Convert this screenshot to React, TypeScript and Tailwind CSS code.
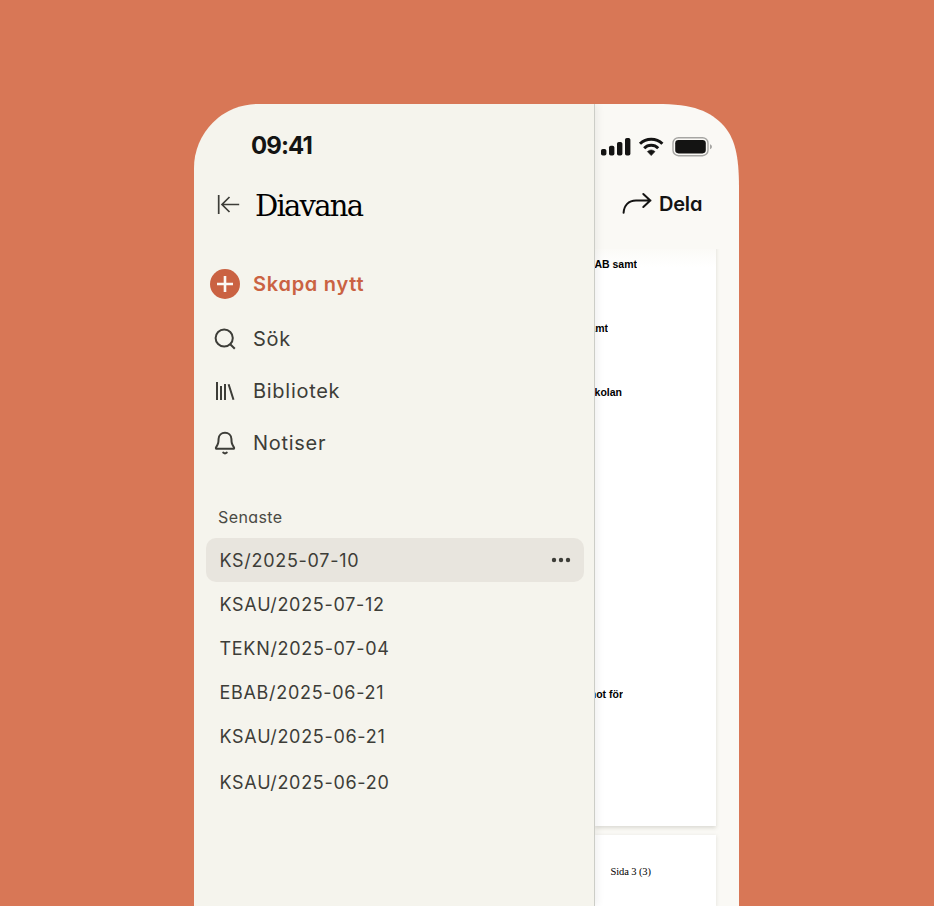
import React from "react";

const recent = [
  "KS/2025-07-10",
  "KSAU/2025-07-12",
  "TEKN/2025-07-04",
  "EBAB/2025-06-21",
  "KSAU/2025-06-21",
  "KSAU/2025-06-20",
];

function SearchIcon() {
  return (
    <svg width="30" height="30" viewBox="0 0 30 30" fill="none" stroke="#3d3d38" strokeWidth="2">
      <circle cx="14.2" cy="14" r="8.6" />
      <path d="M20.200 20.200l4.600 4.600" />
    </svg>
  );
}

function LibraryIcon() {
  return (
    <svg width="30" height="30" viewBox="0 0 30 30" fill="none" stroke="#3d3d38" strokeWidth="2">
      <path d="M7 6v18M11 10v14M15 8v16M18.6 8.2l4.9 15.6" />
    </svg>
  );
}

function BellIcon() {
  return (
    <svg width="30" height="30" viewBox="0 0 30 30" fill="none" stroke="#3d3d38" strokeWidth="2" strokeLinejoin="round" strokeLinecap="round">
      <path d="M15 4.800c-3.600 0-6.200 2.500-6.400 6l-.2 3c-.1 1.200-.4 2-1 3.100l-1.400 2.500c-.4.800 0 1.400.8 1.400h16.400c.8 0 1.200-.6.8-1.400l-1.400-2.500c-.6-1.100-.9-1.900-1-3.100l-.2-3c-.2-3.500-2.800-6-6.400-6z" />
      <path d="M13.200 24.600c1 .9 2.600.9 3.600 0" />
    </svg>
  );
}

function NavItem({ icon, label }: { icon: React.ReactNode; label: string }) {
  return (
    <div className="flex h-[52px] items-center gap-[13px]">
      {icon}
      <span className="text-[20px] tracking-[0.72px] text-[#3d3d38]">{label}</span>
    </div>
  );
}

function Drawer() {
  return (
    <aside className="z-10 flex w-[401px] shrink-0 flex-col border-r border-[#cccdc7] bg-[#f5f4ed] shadow-[2px_0_8px_rgba(0,0,0,0.07)]">
      <div className="mt-[27px] ml-[57px] h-[30px] text-[24px] leading-[30px] font-bold tracking-[-0.9px] text-[#141413]">
        09:41
      </div>
      <div className="mt-[23px] ml-[23px] flex h-[40px] items-center">
        <svg width="24" height="22" viewBox="0 0 24 22" fill="none" stroke="#3d3d38" strokeWidth="1.700">
          <path d="M1.700 2v19M22.200 11.500H5M12.500 4L5 11.500l7.500 7.500" />
        </svg>
        <span className="ml-[14px] pt-[3px] font-['DejaVu_Serif',serif] text-[29px] leading-[40px] tracking-[-1.75px] text-black">
          Diavana
        </span>
      </div>
      <nav className="mt-[44px] ml-4 flex flex-col">
        <div className="mb-[13px] flex h-[32px] items-center gap-[13px]">
          <svg width="30" height="30" viewBox="0 0 30 30">
            <circle cx="15" cy="15" r="15" fill="#ca6242" />
            <path d="M15 7v16M7 15h16" stroke="#fbf9f5" strokeWidth="2.600" />
          </svg>
          <span className="text-[20px] font-semibold tracking-[0.74px] text-[#ca6242]">Skapa nytt</span>
        </div>
        <NavItem icon={<SearchIcon />} label="Sök" />
        <NavItem icon={<LibraryIcon />} label="Bibliotek" />
        <NavItem icon={<BellIcon />} label="Notiser" />
      </nav>
      <div className="mt-[36px] ml-6 h-[24px] text-[16px] leading-[24px] tracking-[0.4px] text-[#4a4a44]">Senaste</div>
      <ul className="mt-[9px] mr-[10px] ml-3">
        {recent.map((name, i) => (
          <li
            key={i}
            className={
              "flex h-[44px] items-center justify-between rounded-[10px] pr-[13px] pl-[13.500px] text-[18px] tracking-[0.7px] text-[#3d3d38]" +
              (i === 0 ? " bg-[#e8e5de]" : "") +
              (i === 5 ? " mt-[2px]" : "")
            }
          >
            <span>{name}</span>
            {i === 0 && (
              <svg width="20" height="6" viewBox="0 0 20 6" fill="#3d3d38">
                <circle cx="3" cy="3" r="2.200" />
                <circle cx="10" cy="3" r="2.200" />
                <circle cx="17" cy="3" r="2.200" />
              </svg>
            )}
          </li>
        ))}
      </ul>
    </aside>
  );
}

function StatusIcons() {
  return (
    <svg width="114" height="22" viewBox="0 0 114 22">
      <g fill="#141413">
        <rect x="1" y="13" width="5.400" height="6.500" rx="1.800" />
        <rect x="9" y="9.700" width="5.400" height="9.800" rx="1.800" />
        <rect x="17" y="6" width="5.400" height="13.500" rx="1.800" />
        <rect x="25" y="2" width="5.400" height="17.500" rx="1.800" />
        <path d="M47.400 15.600a5.800 5.800 0 0 1 7.600 0L51.200 19.600z" stroke="#141413" strokeWidth=".6" strokeLinejoin="round" />
      </g>
      <g fill="none" stroke="#141413" strokeWidth="3">
        <path d="M40 7.800a16 16 0 0 1 22.400 0" />
        <path d="M44.200 12.200a9.900 9.900 0 0 1 14 0" />
      </g>
      <rect x="73" y="1.700" width="35" height="18" rx="5.500" fill="none" stroke="#a6a6a3" strokeWidth="1.400" />
      <rect x="75.200" y="4" width="30.600" height="13.400" rx="3.300" fill="#141413" />
      <path d="M110 8.200c2.600.8 2.600 4.200 0 5z" fill="#a6a6a3" />
    </svg>
  );
}

function DocLine({ text, className }: { text: string; className: string }) {
  return (
    <div className={"flex h-[14px] justify-end overflow-hidden text-[10.500px] leading-[14px] font-bold whitespace-nowrap text-black " + className}>
      <span>{text}</span>
    </div>
  );
}

function DocumentView() {
  return (
    <main className="flex flex-1 flex-col overflow-hidden bg-[#faf9f5]">
      <div className="mt-[32px] ml-[5px] h-[22px]">
        <StatusIcons />
      </div>
      <div className="mt-[30px] ml-[26px] flex h-[32px] items-center">
        <svg width="32" height="24" viewBox="0 0 32 24" fill="none" stroke="#141413" strokeWidth="2" strokeLinecap="round" strokeLinejoin="round">
          <path d="M2.600 20.800C3 13.500 7.500 8.500 15 8.500h14.500M22.300 2l7 6.500-7 6.500" />
        </svg>
        <span className="ml-[6px] text-[20px] font-semibold tracking-[-0.2px] text-[#141413]">Dela</span>
      </div>
      <div className="mt-[25px] h-[581px] w-[121px] shrink-0 bg-linear-to-b from-[#faf9f5] to-white to-[22px] pt-[12px] font-['Liberation_Sans',Arial,sans-serif] shadow-[0_2px_4px_rgba(60,60,40,0.16)] [clip-path:inset(4px_-8px_-8px_0)]">
        <DocLine text="AB samt" className="w-[42px]" />
        <DocLine text="amt" className="mt-[50px] w-[13px]" />
        <DocLine text="skolan" className="mt-[50px] w-[27px]" />
        <DocLine text="not för" className="mt-[288px] w-[28px]" />
      </div>
      <div className="mt-[9px] w-[121px] flex-1 bg-white pt-[30px] pl-[15.500px] font-['Liberation_Serif','Times_New_Roman',serif] text-[10.500px] leading-[14px] tracking-[-0.1px] text-black shadow-[0_1px_4px_rgba(60,60,40,0.13)]">
        Sida 3 (3)
      </div>
    </main>
  );
}

export default function App() {
  return (
    <div className="h-[906px] w-[934px] overflow-hidden bg-[#d87756] pt-[104px] pl-[194px] font-['Inter',sans-serif] [font-feature-settings:'cv11']">
      <div className="flex h-[802px] w-[545px] overflow-hidden rounded-tl-[64px] [clip-path:path('M0_0H462C500_0_516_7_530_22C543_37_545_58_545_86V802H0Z')]">
        <Drawer />
        <DocumentView />
      </div>
    </div>
  );
}
